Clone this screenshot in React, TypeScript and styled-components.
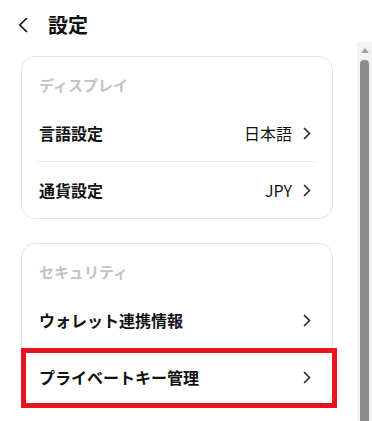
import styled, { createGlobalStyle } from 'styled-components'

const GlobalStyle = createGlobalStyle`
  html, body {
    margin: 0;
    padding: 0;
    background: #ffffff;
  }
  body {
    font-family: "Noto Sans CJK JP", "Noto Sans", sans-serif;
    color: #111111;
  }
`;

const Page = styled.div`
  width: 372px;
  height: 421px;
  overflow: hidden;
  display: flex;
  flex-direction: column;
`;

const Header = styled.div`
  height: 34px;
  padding: 8px 0 0 18px;
  display: flex;
  align-items: center;
  gap: 19px;
  flex-shrink: 0;
`;

const Title = styled.h1`
  margin: 0;
  font-size: 20px;
  font-weight: 700;
  line-height: 26px;
`;

const Body = styled.div`
  flex: 1;
  display: flex;
  min-height: 0;
`;

const Content = styled.div`
  flex: 1;
  padding: 14px 24px 0 21px;
  display: flex;
  flex-direction: column;
  gap: 24px;
`;

const Card = styled.section`
  border: 1px solid #e4e4e4;
  border-radius: 14px;
  background: #fff;
`;

const SectionLabel = styled.div`
  padding: 15px 17px 0;
  margin-bottom: 7px;
  font-size: 15px;
  font-weight: 700;
  line-height: 26px;
  color: #c3c3c3;
`;

const Row = styled.div`
  position: relative;
  height: 56px;
  padding: 0 21px 0 17px;
  display: flex;
  align-items: center;
  justify-content: space-between;
`;

const RowTitle = styled.span`
  font-size: 16px;
  font-weight: 700;
`;

const RowEnd = styled.div`
  display: flex;
  align-items: center;
  gap: 11px;
`;

const Value = styled.span`
  font-size: 16px;
  font-weight: 400;
`;

const Divider = styled.div`
  height: 1px;
  margin: 0 16px;
  background: #ececec;
`;

const Highlight = styled.div`
  position: absolute;
  top: -1px;
  left: -1px;
  right: -5px;
  bottom: -3px;
  border: 5px solid #e8141e;
  pointer-events: none;
`;

const Scrollbar = styled.div`
  width: 15px;
  background: #f3f3f3;
  display: flex;
  flex-direction: column;
  align-items: center;
  padding-top: 6px;
  flex-shrink: 0;
`;

const Arrow = styled.div`
  width: 0;
  height: 0;
  border-left: 4px solid transparent;
  border-right: 4px solid transparent;
  border-bottom: 5px solid #a3a3a3;
`;

const Thumb = styled.div`
  margin-top: 7px;
  width: 9px;
  flex: 1;
  background: #8c8c8c;
  border-radius: 4px 4px 0 0;
`;

const BackIcon = () => (
  <svg width="11" height="16" viewBox="0 0 11 16" fill="none">
    <path d="M9 1 L1.8 8 L9 15" stroke="#111" strokeWidth="1.7" />
  </svg>
);

const Chevron = () => (
  <svg width="8" height="13" viewBox="0 0 8 13" fill="none">
    <path d="M1 1 L6.5 6.5 L1 12" stroke="#222" strokeWidth="1.5" />
  </svg>
);

type ItemProps = { title: string; value?: string; marked?: boolean };

const Item = ({ title, value, marked }: ItemProps) => (
  <Row>
    <RowTitle>{title}</RowTitle>
    <RowEnd>
      {value && <Value>{value}</Value>}
      <Chevron />
    </RowEnd>
    {marked && <Highlight />}
  </Row>
);

const App = () => {
  return (
    <>
      <GlobalStyle />
      <Page>
        <Header>
          <BackIcon />
          <Title>設定</Title>
        </Header>
        <Body>
          <Content>
            <Card>
              <SectionLabel>ディスプレイ</SectionLabel>
              <Item title="言語設定" value="日本語" />
              <Divider />
              <Item title="通貨設定" value="JPY" />
            </Card>
            <Card>
              <SectionLabel>セキュリティ</SectionLabel>
              <Item title="ウォレット連携情報" />
              <Divider />
              <Item title="プライベートキー管理" marked />
            </Card>
          </Content>
          <Scrollbar>
            <Arrow />
            <Thumb />
          </Scrollbar>
        </Body>
      </Page>
    </>
  );
};

export default App;
